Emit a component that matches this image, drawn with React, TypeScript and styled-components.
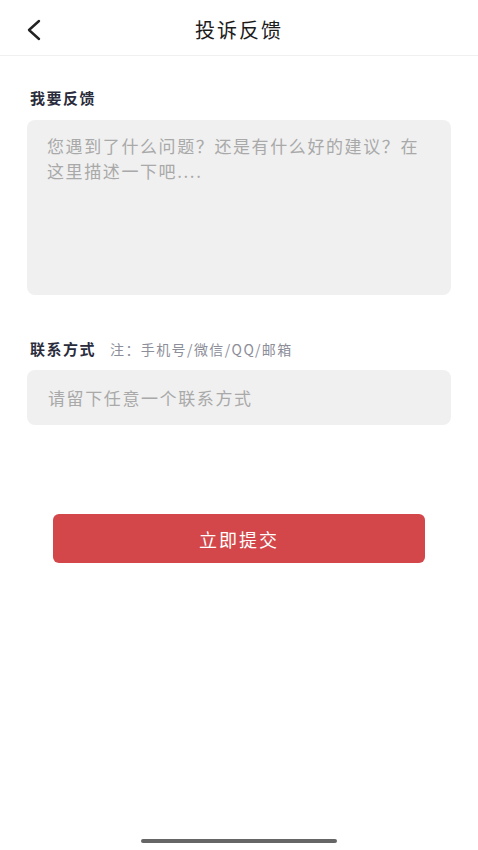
import styled, { createGlobalStyle } from "styled-components";

const GlobalStyle = createGlobalStyle`
  html, body {
    margin: 0;
    padding: 0;
    background: #ffffff;
  }

  body {
    font-family: "Noto Sans CJK SC", "Noto Sans", sans-serif;
  }

  * {
    box-sizing: border-box;
  }
`;

function App() {
  return (
    <>
      <GlobalStyle />
      <Page>
        <Header>
          <BackButton aria-label="返回">
            <svg width="16" height="22" viewBox="0 0 16 22" fill="none">
              <path
                d="M13 2 L3 11 L13 20"
                stroke="#222"
                strokeWidth="2.4"
                strokeLinecap="round"
                strokeLinejoin="round"
              />
            </svg>
          </BackButton>
          <Title>投诉反馈</Title>
        </Header>

        <Content>
          <Label>我要反馈</Label>
          <FeedbackArea placeholder="您遇到了什么问题？还是有什么好的建议？在这里描述一下吧...." />

          <LabelRow>
            <Label>联系方式</Label>
            <Note>注：手机号/微信/QQ/邮箱</Note>
          </LabelRow>
          <ContactInput placeholder="请留下任意一个联系方式" />

          <SubmitButton>立即提交</SubmitButton>
        </Content>

        <HomeBar />
      </Page>
    </>
  );
}

const Page = styled.div`
  min-height: 850px;
  display: flex;
  flex-direction: column;
`;

const Header = styled.header`
  height: 56px;
  display: flex;
  align-items: center;
  justify-content: center;
  border-bottom: 1px solid #f0f0f0;
  padding-top: 3px;
  position: relative;
`;

const BackButton = styled.button`
  position: absolute;
  left: 26px;
  top: 19px;
  border: none;
  background: none;
  padding: 0;
  display: flex;
`;

const Title = styled.h1`
  margin: 0;
  font-size: 20px;
  font-weight: 400;
  letter-spacing: 2px;
  color: #1c1c1c;
`;

const Content = styled.main`
  display: flex;
  flex-direction: column;
  padding: 32px 27px 0;
`;

const Label = styled.span`
  font-size: 15px;
  line-height: 20px;
  font-weight: 600;
  letter-spacing: 1.5px;
  color: #2a2c3c;
  padding-left: 3px;
`;

const LabelRow = styled.div`
  display: flex;
  align-items: baseline;
  gap: 14px;
  margin-top: 44px;
`;

const Note = styled.span`
  font-size: 14px;
  line-height: 20px;
  letter-spacing: 1.4px;
  color: #8c8e99;
`;

const Field = `
  width: 100%;
  border: none;
  outline: none;
  background: #f0f0f0;
  border-radius: 8px;
  font-family: "Noto Sans CJK SC", "Noto Sans", sans-serif;
  font-size: 17px;
  letter-spacing: 1.6px;
  color: #333;

  &::placeholder {
    color: #a9a9a9;
  }
`;

const FeedbackArea = styled.textarea`
  ${Field}
  height: 175px;
  margin-top: 12px;
  padding: 13px 20px;
  line-height: 25px;
  resize: none;
`;

const ContactInput = styled.input`
  ${Field}
  height: 55px;
  margin-top: 11px;
  padding: 0 21px;
`;

const SubmitButton = styled.button`
  align-self: center;
  width: 372px;
  height: 49px;
  margin-top: 89px;
  border: none;
  border-radius: 6px;
  background: #d3474a;
  color: #ffffff;
  font-family: "Noto Sans CJK SC", "Noto Sans", sans-serif;
  font-size: 18px;
  letter-spacing: 2px;
`;

const HomeBar = styled.div`
  margin: auto auto 7px;
  width: 196px;
  height: 4px;
  border-radius: 2px;
  background: #666666;
`;

export default App;
